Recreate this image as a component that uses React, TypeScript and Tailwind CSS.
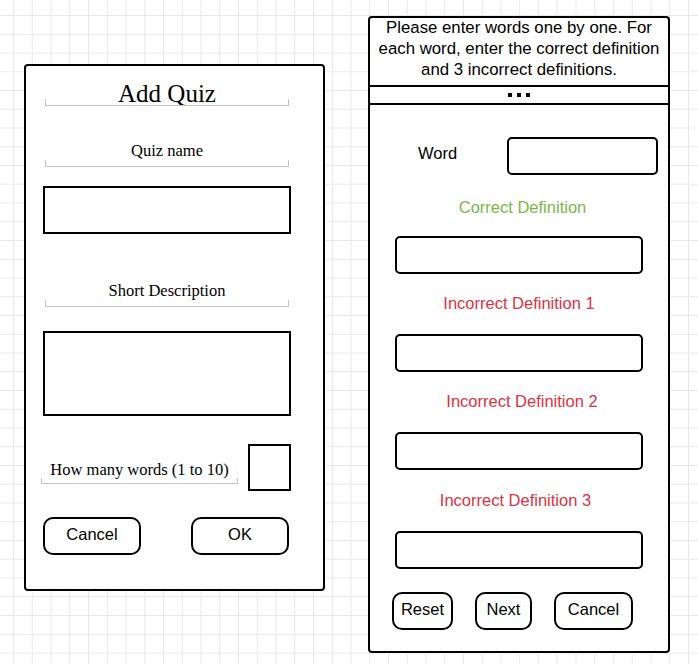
import { FC, ReactNode } from "react";

const Bracket: FC<{ className?: string }> = ({ className = "" }) => (
  <div className={`border-x border-b border-[#c4c4c4] ${className}`} />
);

const SerifLabel: FC<{ children: ReactNode; className?: string }> = ({
  children,
  className = "",
}) => (
  <div className={`ml-[19px] w-[244px] flex flex-col ${className}`}>
    <p className="text-center text-[16.5px] leading-[16px]">{children}</p>
    <Bracket className="mt-px h-[7px]" />
  </div>
);

const PillButton: FC<{ children: ReactNode; className?: string }> = ({
  children,
  className = "",
}) => (
  <button
    type="button"
    className={`h-[38px] pb-[3px] rounded-[10px] border-2 border-black bg-white flex items-center justify-center text-[16.5px] font-['Liberation_Sans',Arial,sans-serif] text-black ${className}`}
  >
    {children}
  </button>
);

const DefInput: FC<{ className?: string }> = ({ className = "" }) => (
  <div
    className={`ml-[25px] w-[248px] h-[38px] rounded-[5px] border-2 border-black ${className}`}
  />
);

const AddQuizPanel: FC = () => (
  <div className="mt-[64px] ml-[24px] w-[301px] h-[527px] shrink-0 rounded-[4px] border-2 border-black bg-white flex flex-col font-['Liberation_Serif','Times_New_Roman',serif] text-black">
    <div className="mt-[15px] ml-[19px] w-[244px] flex flex-col">
      <p className="text-center text-[25px] leading-[25px]">Add Quiz</p>
      <Bracket className="-mt-[7px] h-[7px]" />
    </div>

    <SerifLabel className="mt-[37px]">Quiz name</SerifLabel>
    <div className="mt-[19px] ml-[17px] w-[248px] h-[48px] border-2 border-black" />

    <SerifLabel className="mt-[49px]">Short Description</SerifLabel>
    <div className="mt-[24px] ml-[17px] w-[248px] h-[85px] border-2 border-black" />

    <div className="mt-[28px] flex items-start">
      <div className="ml-[15px] w-[197px] mt-[18px] flex flex-col">
        <p className="text-center text-[16.5px] leading-[16px] whitespace-nowrap">
          How many words (1 to 10)
        </p>
        <Bracket className="h-[6px]" />
      </div>
      <div className="ml-[10px] w-[43px] h-[47px] border-2 border-black" />
    </div>

    <div className="mt-[26px] flex">
      <PillButton className="ml-[17px] w-[98px]">Cancel</PillButton>
      <PillButton className="ml-[50px] w-[98px]">OK</PillButton>
    </div>
  </div>
);

const WordsPanel: FC = () => (
  <div className="mt-[16px] ml-[43px] w-[302px] h-[637px] shrink-0 rounded-[4px] border-2 border-black bg-white flex flex-col font-['Liberation_Sans',Arial,sans-serif] text-black">
    <div className="h-[67px] text-center text-[16.8px] leading-[21px]">
      <p className="-mt-px whitespace-nowrap">
        Please enter words one by one. For
        <br />
        each word, enter the correct definition
        <br />
        and 3 incorrect definitions.
      </p>
    </div>
    <div className="h-[20px] border-y-2 border-black flex items-center justify-center gap-[5px]">
      <span className="w-[4px] h-[4px] bg-black" />
      <span className="w-[4px] h-[4px] bg-black" />
      <span className="w-[4px] h-[4px] bg-black" />
    </div>

    <div className="mt-[32px] flex items-start">
      <p className="ml-[48px] mt-[7px] text-[16.5px] leading-[19px]">Word</p>
      <div className="ml-auto mr-[10px] w-[151px] h-[38px] rounded-[5px] border-2 border-black" />
    </div>

    <p className="mt-[23px] pl-[7px] text-center text-[16.5px] leading-[19px] text-[#7ab648]">
      Correct Definition
    </p>
    <DefInput className="mt-[19px]" />

    <p className="mt-[20px] text-center text-[16.5px] leading-[19px] text-[#d9333f]">
      Incorrect Definition 1
    </p>
    <DefInput className="mt-[21px]" />

    <p className="mt-[20px] pl-[6px] text-center text-[16.5px] leading-[19px] text-[#d9333f]">
      Incorrect Definition 2
    </p>
    <DefInput className="mt-[21px]" />

    <p className="mt-[21px] pr-[7px] text-center text-[16.5px] leading-[19px] text-[#d9333f]">
      Incorrect Definition 3
    </p>
    <DefInput className="mt-[21px]" />

    <div className="mt-[23px] flex">
      <PillButton className="ml-[22px] w-[61px]">Reset</PillButton>
      <PillButton className="ml-[22px] w-[57px]">Next</PillButton>
      <PillButton className="ml-[22px] w-[79px]">Cancel</PillButton>
    </div>
  </div>
);

export default function App() {
  return (
    <div className="w-[698px] h-[664px] overflow-hidden flex items-start bg-white bg-[linear-gradient(to_right,#e8e8e8_1px,transparent_1px),linear-gradient(to_bottom,#e8e8e8_1px,transparent_1px)] bg-[size:18.75px_18.75px] bg-[position:13px_15px]">
      <AddQuizPanel />
      <WordsPanel />
    </div>
  );
}
